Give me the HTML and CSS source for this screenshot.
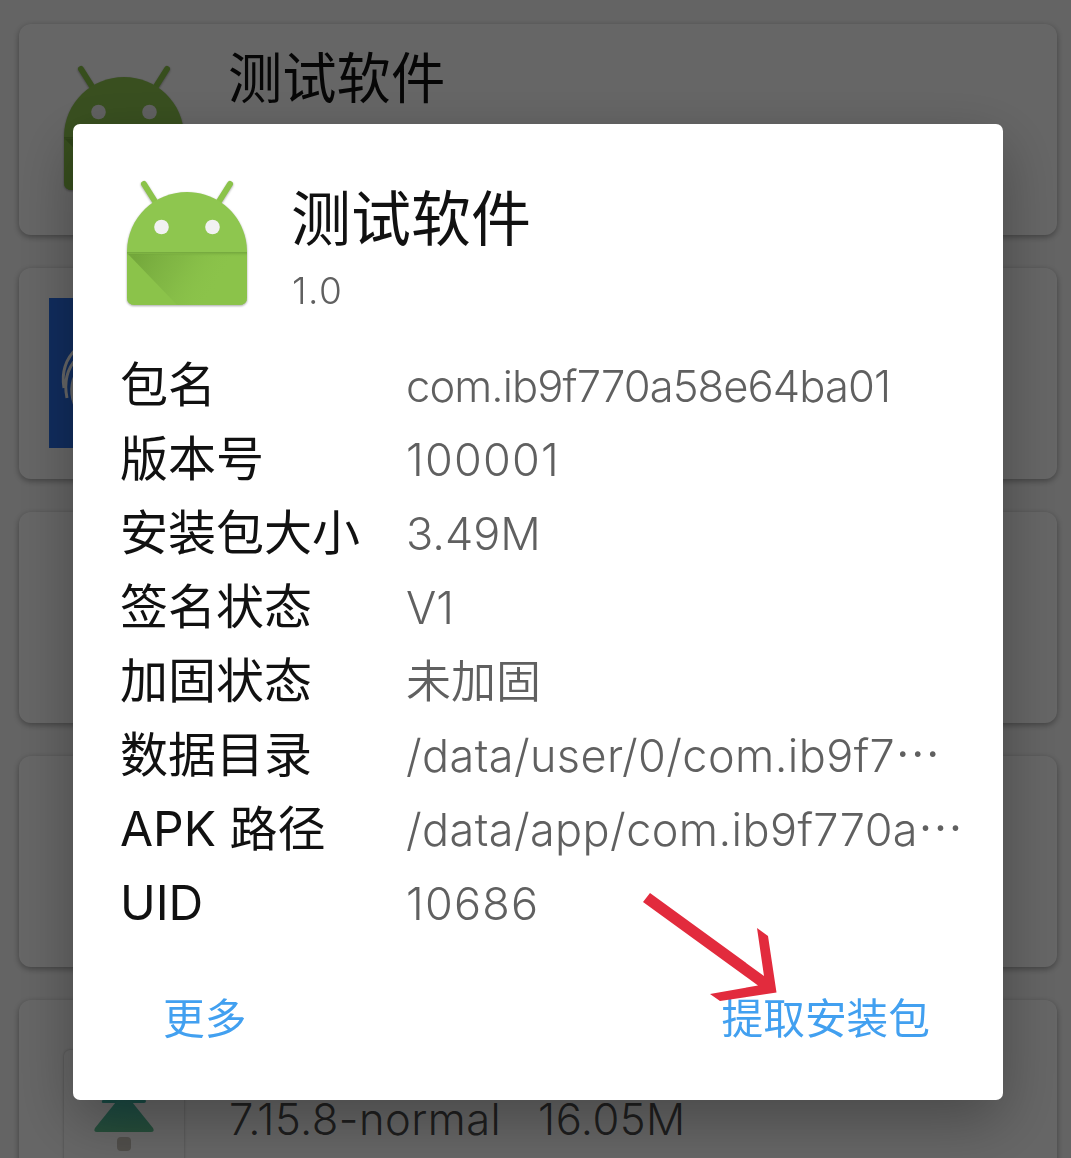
FILE: index.html
```html
<!DOCTYPE html>
<html lang="zh-CN">
<head>
<meta charset="utf-8">
<title>测试软件</title>
<link rel="stylesheet" href="styles.css">
</head>
<body>
<svg class="defs" aria-hidden="true">
  <defs>
    <linearGradient id="crease" gradientUnits="userSpaceOnUse" x1="10" y1="75" x2="85" y2="120">
      <stop offset="0" stop-color="#5b8a2c" stop-opacity=".5"/>
      <stop offset=".5" stop-color="#6a9b38" stop-opacity=".25"/>
      <stop offset="1" stop-color="#8bc34a" stop-opacity="0"/>
    </linearGradient>
    <linearGradient id="fold" x1="0" y1="0" x2="0" y2="1">
      <stop offset="0" stop-color="#4f7d26" stop-opacity=".45"/>
      <stop offset="1" stop-color="#8bc34a" stop-opacity="0"/>
    </linearGradient>
    <linearGradient id="tree" x1="0" y1="0" x2="0" y2="1">
      <stop offset="0" stop-color="#3fb8b0"/>
      <stop offset="1" stop-color="#5fc090"/>
    </linearGradient>
    <symbol id="robot" viewBox="0 0 124 128">
      <path d="M19 5 L31 24 M105 5 L93 24" stroke="#8bc34a" stroke-width="6" stroke-linecap="round" fill="none"/>
      <path d="M2 72C2.500 38 30 13 62 13s59.500 25 60 59v46q0 8-8 8H10q-8 0-8-8z" fill="#8ec64f"/>
      <path d="M2 74H122V118q0 8-8 8H10q-8 0-8-8z" fill="#8bc34a"/>
      <path d="M3 75H121V126H52z" fill="url(#crease)"/>
      <rect x="2" y="73" width="120" height="5" fill="url(#fold)"/>
      <circle cx="36.500" cy="48" r="7.300" fill="#f1f1f1"/>
      <circle cx="87.500" cy="48" r="7.300" fill="#f1f1f1"/>
    </symbol>
  </defs>
</svg>
<main class="list">
  <article class="card">
    <svg class="robot robot-list"><use href="#robot"/></svg>
    <h2 class="card-title">测试软件</h2>
  </article>
  <article class="card">
    <svg class="globe" viewBox="0 0 150 150">
      <rect width="150" height="150" fill="#2a6fe8"/>
      <path d="M28 50Q11 66 15 90M28 60Q13 76 18 100M28 74Q18 90 27 110" fill="none" stroke="#fff" stroke-width="3"/>
    </svg>
  </article>
  <article class="card"></article>
  <article class="card"></article>
  <article class="card card-last">
    <div class="thumb">
      <svg viewBox="0 0 120 120" width="120" height="120">
        <path d="M60 10 82 51q0 2-2 2H40q-3 0-2-2z" fill="#3fb8a8"/>
        <path d="M60 42 89 78q2 4-2 4H33q-4 0-2-4z" fill="url(#tree)"/>
        <rect x="53" y="87" width="14" height="14" rx="4" fill="#c8c3ba"/>
      </svg>
    </div>
    <div class="card-text">
      <p class="card-meta"><span>7.15.8-normal</span><span>16.05M</span></p>
    </div>
  </article>
</main>
<div class="scrim">
  <section class="dialog">
    <header class="head">
      <svg class="robot"><use href="#robot"/></svg>
      <div class="head-text">
        <h1 class="title">测试软件</h1>
        <p class="version">1.0</p>
      </div>
    </header>
    <dl class="info">
      <dt>包名</dt><dd class="package">com.ib9f770a58e64ba01</dd>
      <dt>版本号</dt><dd class="number">100001</dd>
      <dt>安装包大小</dt><dd>3.49M</dd>
      <dt>签名状态</dt><dd>V1</dd>
      <dt>加固状态</dt><dd>未加固</dd>
      <dt>数据目录</dt><dd class="path">/data/user/0/com.ib9f7<span class="more">⋯</span></dd>
      <dt>APK 路径</dt><dd class="path">/data/app/com.ib9f770a<span class="more">⋯</span></dd>
      <dt>UID</dt><dd class="number">10686</dd>
    </dl>
    <footer class="actions">
      <a>更多</a>
      <a>提取安装包</a>
    </footer>
    <svg class="arrow" viewBox="0 0 136 110"><path d="M7 0 121 83 114 35 125 43 133.500 99.500 77 108 67 101 115 92.500 0 9z" fill="#e22b3d"/></svg>
  </section>
</div>
</body>
</html>
```

FILE: styles.css
```css
* { box-sizing: border-box; margin: 0; padding: 0; }

body {
  width: 1071px;
  height: 1158px;
  overflow: hidden;
  background: #fafafa;
  color: #111;
  font-family: Inter, "Noto Sans CJK SC", sans-serif;
  font-weight: 400;
}

.defs { position: absolute; width: 0; height: 0; }

.list {
  display: flex;
  flex-direction: column;
  gap: 33px;
  height: 1158px;
  padding: 24px 14px 0 19px;
  overflow: hidden;
}

.card {
  display: flex;
  flex: none;
  height: 211px;
  border-radius: 12px;
  background: #fff;
  box-shadow: 0 2px 6px rgba(0, 0, 0, .35);
}

.robot {
  flex: none;
  width: 124px;
  height: 128px;
  filter: drop-shadow(0 1px 1px rgba(0, 0, 0, .35));
}

.robot-list { margin: 40px 0 0 43px; }

.card-title {
  margin: 14px 0 0 42px;
  font-size: 54.300px;
  line-height: 80px;
  font-weight: 400;
}

.globe { width: 150px; height: 150px; margin: 30px 0 0 30px; }

.thumb {
  width: 120px;
  height: 121px;
  margin: 50px 0 0 45px;
  border-radius: 6px;
  box-shadow: 0 0 3px rgba(0, 0, 0, .3);
}

.card-text { margin: 89px 0 0 45px; }

.card-meta {
  display: flex;
  gap: 37px;
  color: #4c4c4c;
  font-size: 43.500px;
  font-weight: 350;
  letter-spacing: .45px;
  line-height: 60px;
}

.scrim {
  position: fixed;
  inset: 0;
  display: flex;
  align-items: flex-start;
  padding: 124px 0 0 73px;
  background: rgba(0, 0, 0, .6);
}

.dialog {
  position: relative;
  width: 930px;
  height: 976px;
  border-radius: 7px;
  background: #fff;
  box-shadow: 0 20px 60px rgba(0, 0, 0, .3);
}

.head {
  display: flex;
  height: 224px;
  padding: 55px 0 0 52px;
}

.head-text { margin-left: 43px; }

.title {
  margin-left: -1px;
  font-size: 60px;
  line-height: 80px;
  font-weight: 400;
}

.version {
  margin-top: 7px;
  color: #606060;
  font-size: 37px;
  font-weight: 350;
  letter-spacing: 1.500px;
  line-height: 50px;
}

.info {
  display: grid;
  grid-template-columns: 286px 1fr;
  grid-auto-rows: 74px;
  padding-left: 47px;
}

.info dt {
  font-size: 48px;
  line-height: 74px;
}

.info dd {
  padding-top: 1px;
  color: #606060;
  font-size: 45px;
  font-weight: 350;
  line-height: 74px;
  white-space: nowrap;
}

.info .package {
  font-size: 43.500px;
  letter-spacing: -.9px;
}

.info .number { letter-spacing: 1.200px; }

.info .path { letter-spacing: .4px; }

.more {
  font-family: "Noto Sans CJK SC", sans-serif;
  line-height: 1;
}

.actions {
  display: flex;
  justify-content: space-between;
  padding: 49px 73px 0 90px;
}

.actions a {
  color: #42a0f0;
  font-size: 41.700px;
  line-height: 60px;
}

/* Pointer laid over the confirm action */
.arrow {
  position: absolute;
  left: 570px;
  top: 769px;
  width: 136px;
  height: 110px;
}
```
